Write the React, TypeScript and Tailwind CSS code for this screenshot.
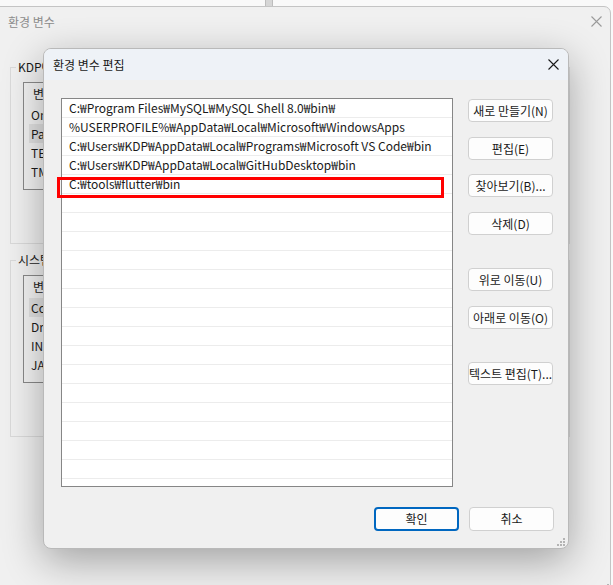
import React from 'react'

const FONT = { fontFamily: '"Noto Sans CJK KR", "Noto Sans", sans-serif' }

const paths = [
    'C:₩Program Files₩MySQL₩MySQL Shell 8.0₩bin₩',
    '%USERPROFILE%₩AppData₩Local₩Microsoft₩WindowsApps',
    'C:₩Users₩KDP₩AppData₩Local₩Programs₩Microsoft VS Code₩bin',
    'C:₩Users₩KDP₩AppData₩Local₩GitHubDesktop₩bin',
    'C:₩tools₩flutter₩bin',
]

function CloseX({ className }: { className?: string }) {
    return (
        <svg width="11" height="11" viewBox="0 0 11 11" className={className}>
            <path d="M0.5 0.5 L10.5 10.5 M10.5 0.5 L0.5 10.5" stroke="currentColor" strokeWidth="1.1" fill="none" />
        </svg>
    )
}

function Grip({ className }: { className?: string }) {
    const dots = [
        [6, 0],
        [3, 3],
        [6, 3],
        [0, 6],
        [3, 6],
        [6, 6],
    ]
    return (
        <svg width="8" height="8" viewBox="0 0 8 8" className={className}>
            {dots.map(([x, y]) => (
                <rect key={`${x}-${y}`} x={x} y={y} width="2" height="2" fill="#b4b4b4" />
            ))}
        </svg>
    )
}

function Btn({ label, className = '' }: { label: string; className?: string }) {
    return (
        <div
            className={`flex h-[23px] w-[85px] items-center justify-center whitespace-nowrap rounded-[4px] border border-[#d0d0d0] bg-[#fdfdfd] text-[12px] text-[#1a1a1a] ${className}`}
        >
            {label}
        </div>
    )
}

// only the left edge of these groups is visible, the rest sits under the dialog
function VarGroup({ title, rows, selected }: { title: string; rows: string[]; selected: number }) {
    return (
        <fieldset className="w-[560px] border border-[#dadada] pb-[53px] pl-[12px] pt-[7px]">
            <legend className="ml-[-7px] px-[2px] text-[12px] leading-[16px] text-[#1a1a1a]">{title}</legend>
            <div className="h-[108px] w-[520px] border border-[#8a8a8a] bg-[#f3f3f3] text-[12px] text-[#1b1b1b]">
                <div className="flex h-[22px] items-center pl-[9px]">변수</div>
                {rows.map((r, i) => (
                    <div key={r} className="flex h-[19px] items-center pl-[5px]">
                        <span className={`flex h-full w-full items-center pl-[2px] ${i === selected ? 'bg-[#e2e2e2]' : ''}`}>{r}</span>
                    </div>
                ))}
            </div>
        </fieldset>
    )
}

export default function App() {
    const emptyRows = Array.from({ length: 17 }, (_, i) => i)
    return (
        <div className="relative h-[585px] w-[613px] overflow-hidden bg-[#f9f9f9]" style={FONT}>
            {/* strip of the window further behind */}
            <div className="absolute left-[265px] top-0 h-[7px] w-[8px] border-x border-[#bdbdbd] bg-[#d6d6d6]" />

            {/* background window: 환경 변수 */}
            <div className="absolute left-[-2px] top-[6px] h-[600px] w-[613px] rounded-tr-[7px] border border-[#c4c4c4] bg-[#f0f0f0]">
                <div className="flex h-[29px] items-center justify-between pl-[9px] pr-[8px] text-[12px] text-[#8c8c8c]">
                    <span>환경 변수</span>
                    <CloseX className="text-[#9a9a9a]" />
                </div>
                <div className="flex flex-col pl-[11px] pt-[23px]">
                    <VarGroup title="KDP에 대한 사용자 변수(U)" rows={['OneDrive', 'Path', 'TEMP', 'TMP']} selected={1} />
                    <div className="h-[8px]" />
                    <VarGroup
                        title="시스템 변수(S)"
                        rows={['ComSpec', 'DriverData', 'INCLUDE', 'JAVA_HOME']}
                        selected={0}
                    />
                </div>
                <Grip className="absolute bottom-[13px] right-[1px]" />
            </div>

            {/* foreground dialog: 환경 변수 편집 */}
            <div className="absolute left-[43px] top-[48px] flex h-[501px] w-[526px] flex-col overflow-hidden rounded-[8px] border border-[#b9b9b9] bg-[#f0f0f0] shadow-[0_12px_40px_rgba(0,0,0,0.33)]">
                <div className="flex h-[31px] shrink-0 items-center justify-between bg-[#eef2f7] pl-[9px] pr-[9px] text-[12px] text-[#1a1a1a]">
                    <span>환경 변수 편집</span>
                    <CloseX className="text-[#1a1a1a]" />
                </div>

                <div className="flex gap-[15px] pl-[17px] pt-[18px]">
                    <div className="h-[389px] w-[392px] overflow-hidden border border-[#868686] bg-white text-[12px] text-[#1a1a1a]">
                        {paths.map((p) => (
                            <div key={p} className="flex h-[19px] items-center whitespace-nowrap border-b border-[#ececec] pl-[7px]">
                                {p}
                            </div>
                        ))}
                        {emptyRows.map((i) => (
                            <div key={i} className="h-[19px] border-b border-[#ececec]" />
                        ))}
                    </div>

                    <div className="flex flex-col pt-[1px]">
                        <Btn label="새로 만들기(N)" />
                        <Btn label="편집(E)" className="mt-[15px]" />
                        <Btn label="찾아보기(B)..." className="mt-[14px]" />
                        <Btn label="삭제(D)" className="mt-[15px]" />
                        <Btn label="위로 이동(U)" className="mt-[33px]" />
                        <Btn label="아래로 이동(O)" className="mt-[15px]" />
                        <Btn label="텍스트 편집(T)..." className="mt-[33px]" />
                    </div>
                </div>

                <div className="flex justify-end gap-[10px] pr-[14px] pt-[20px]">
                    <div className="flex h-[24px] w-[85px] items-center justify-center rounded-[4px] border-2 border-[#0067c0] bg-[#fdfdfd] text-[12px] text-[#1a1a1a]">
                        확인
                    </div>
                    <div className="flex h-[24px] w-[85px] items-center justify-center rounded-[4px] border border-[#d0d0d0] bg-[#fdfdfd] text-[12px] text-[#1a1a1a]">
                        취소
                    </div>
                </div>

                <Grip className="absolute bottom-[2px] right-[3px]" />

                {/* red annotation around the newly added path */}
                <div className="absolute left-[13px] top-[128px] h-[21px] w-[387px] border-[3px] border-[#ff0000]" />
            </div>
        </div>
    )
}
